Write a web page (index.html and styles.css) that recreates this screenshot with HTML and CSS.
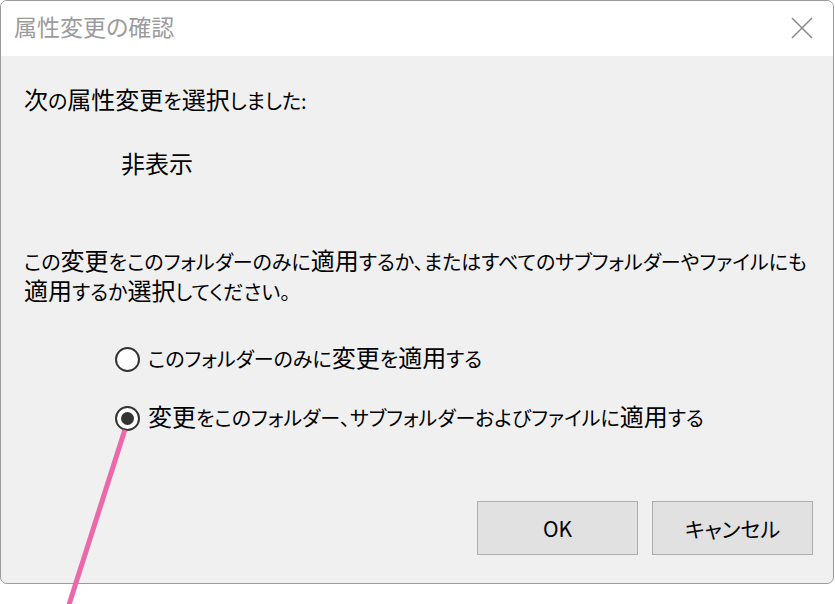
FILE: index.html
```html
<!DOCTYPE html>
<html lang="ja">
<head>
<meta charset="utf-8">
<title>属性変更の確認</title>
<link rel="stylesheet" href="styles.css">
</head>
<body>
<div class="dialog">
  <div class="titlebar">
    <span class="title">属性変更の確認</span>
    <svg class="close" width="22" height="22" viewBox="0 0 22 22"><path d="M1 1 L21 21 M21 1 L1 21" stroke="#8a8a8a" stroke-width="1.5" fill="none"/></svg>
  </div>
  <div class="content">
    <p class="line intro"><span class="kj">次</span>の<span class="kj">属性変更</span>を<span class="kj">選択</span>しました:</p>
    <p class="line attr"><span class="kj">非表示</span></p>
    <p class="para">この<span class="kj">変更</span>をこのフォルダーのみに<span class="kj">適用</span>するか、またはすべてのサブフォルダーやファイルにも<br><span class="kj">適用</span>するか<span class="kj">選択</span>してください。</p>
    <div class="radios">
      <div class="radio-row"><span class="radio"></span><span class="label">このフォルダーのみに<span class="kj">変更</span>を<span class="kj">適用</span>する</span></div>
      <div class="radio-row"><span class="radio checked"></span><span class="label"><span class="kj">変更</span>をこのフォルダー、サブフォルダーおよびファイルに<span class="kj">適用</span>する</span></div>
    </div>
    <div class="buttons">
      <div class="btn">OK</div>
      <div class="btn">キャンセル</div>
    </div>
  </div>
</div>
<svg class="pointer" width="835" height="604" viewBox="0 0 835 604"><line x1="124.8" y1="430" x2="66" y2="614" stroke="#eb69a8" stroke-width="5"/></svg>
</body>
</html>
```

FILE: styles.css
```css
html, body {
  margin: 0;
  padding: 0;
  background: #ffffff;
}
body {
  width: 835px;
  height: 604px;
  position: relative;
  overflow: hidden;
  font-family: "Noto Sans CJK JP", "Noto Sans", sans-serif;
  font-feature-settings: "palt";
  color: #000;
}
.dialog {
  box-sizing: border-box;
  width: 834px;
  height: 584px;
  border: 1px solid #9a9a9a;
  border-radius: 7px;
  background: #f0f0f0;
  overflow: hidden;
  display: flex;
  flex-direction: column;
}
.titlebar {
  height: 55px;
  background: #ffffff;
  display: flex;
  align-items: center;
  justify-content: space-between;
  padding: 0 20px 0 13px;
  flex: none;
}
.title {
  font-size: 23px;
  color: #9b9b9b;
  line-height: 30px;
  margin-top: -6px;
}
.close {
  display: block;
  margin-top: -1px;
}
.content {
  flex: 1;
  padding: 0 20px 0 23px;
  display: flex;
  flex-direction: column;
}
.line, .para {
  margin: 0;
  font-size: 20px;
  line-height: 30px;
  white-space: nowrap;
}
.kj {
  font-size: 24px;
  line-height: 20px;
}
.intro {
  margin-top: 30px;
}
.attr {
  margin-top: 34px;
  margin-left: 97px;
}
.para {
  margin-top: 67px;
}
.radios {
  margin-top: 37px;
  margin-left: 91px;
  display: flex;
  flex-direction: column;
  gap: 29px;
}
.radio-row {
  display: flex;
  align-items: center;
  height: 30px;
  gap: 8px;
}
.radio {
  box-sizing: border-box;
  width: 25px;
  height: 25px;
  border: 2px solid #333333;
  border-radius: 50%;
  background: #ffffff;
  display: flex;
  align-items: center;
  justify-content: center;
  flex: none;
}
.radio.checked::after {
  content: "";
  width: 13px;
  height: 13px;
  border-radius: 50%;
  background: #333333;
}
.label {
  font-size: 20px;
  line-height: 30px;
  white-space: nowrap;
}
.buttons {
  margin-top: 68px;
  display: flex;
  justify-content: flex-end;
  gap: 14px;
}
.btn {
  box-sizing: border-box;
  width: 161px;
  height: 54px;
  background: #e1e1e1;
  border: 1px solid #adadad;
  display: flex;
  align-items: center;
  justify-content: center;
  font-size: 21px;
  line-height: 30px;
}
.pointer {
  position: absolute;
  top: 0;
  left: 0;
  pointer-events: none;
}
```
